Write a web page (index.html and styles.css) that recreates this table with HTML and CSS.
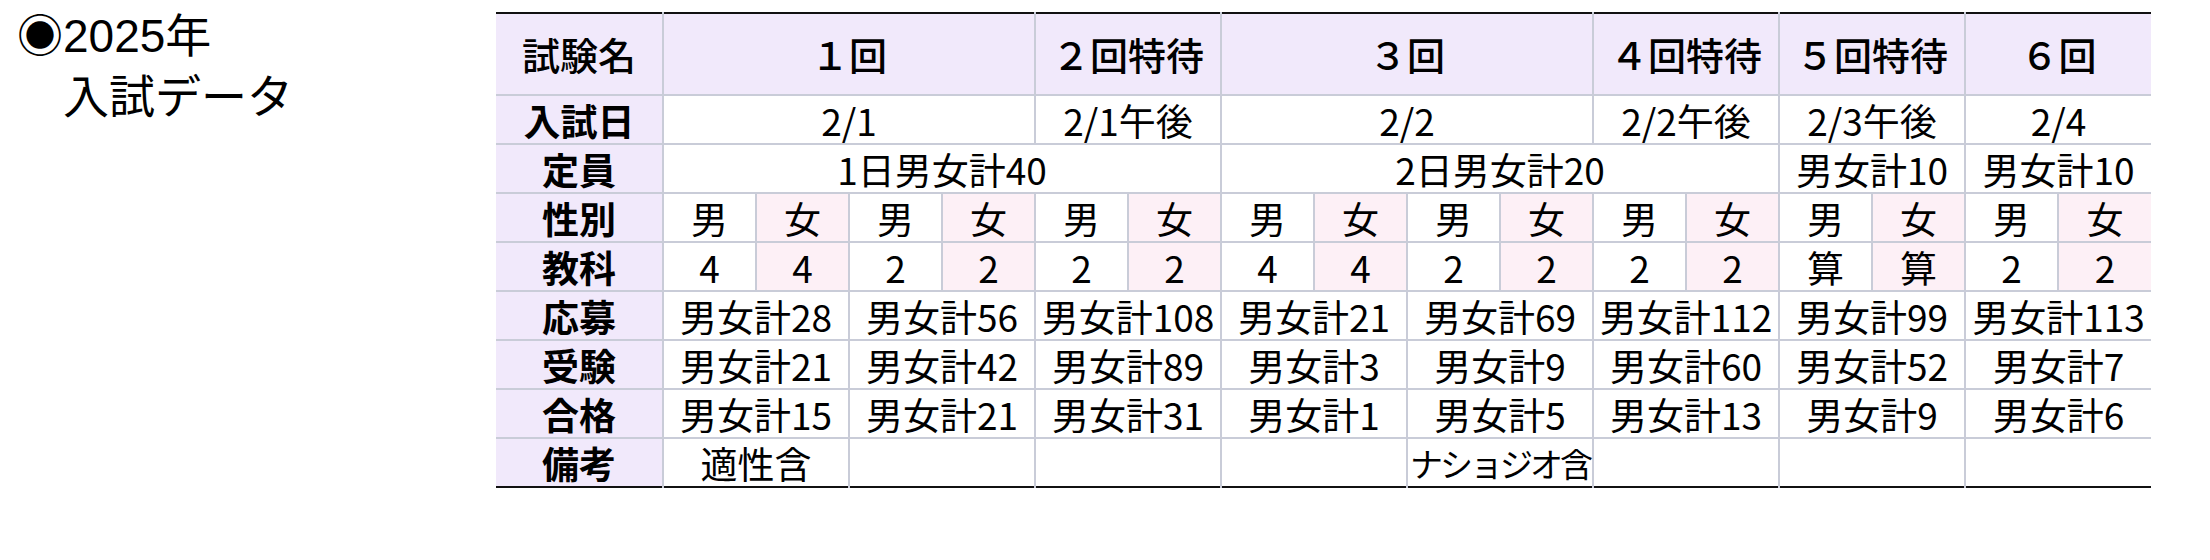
FILE: index.html
```html
<!DOCTYPE html>
<html lang="ja">
<head>
<meta charset="utf-8">
<title>2025年 入試データ</title>
<link rel="stylesheet" href="styles.css">
</head>
<body>
<div class="page">
  <h2 class="title">◉2025年<br>　入試データ</h2>
  <table class="exam">
    <colgroup>
      <col class="c-label">
      <col class="c-sub"><col class="c-sub"><col class="c-sub"><col class="c-sub">
      <col class="c-sub"><col class="c-sub"><col class="c-sub"><col class="c-sub">
      <col class="c-sub"><col class="c-sub"><col class="c-sub"><col class="c-sub">
      <col class="c-sub"><col class="c-sub"><col class="c-sub"><col class="c-sub">
    </colgroup>
    <thead>
      <tr class="head">
        <th class="lbl">試験名</th>
        <th colspan="4">１回</th>
        <th colspan="2">２回特待</th>
        <th colspan="4">３回</th>
        <th colspan="2">４回特待</th>
        <th colspan="2">５回特待</th>
        <th colspan="2">６回</th>
      </tr>
    </thead>
    <tbody>
      <tr>
        <th class="lbl">入試日</th>
        <td colspan="4">2/1</td>
        <td colspan="2">2/1午後</td>
        <td colspan="4">2/2</td>
        <td colspan="2">2/2午後</td>
        <td colspan="2">2/3午後</td>
        <td colspan="2">2/4</td>
      </tr>
      <tr>
        <th class="lbl">定員</th>
        <td colspan="6">1日男女計40</td>
        <td colspan="6">2日男女計20</td>
        <td colspan="2">男女計10</td>
        <td colspan="2">男女計10</td>
      </tr>
      <tr>
        <th class="lbl">性別</th>
        <td>男</td><td class="f">女</td><td>男</td><td class="f">女</td>
        <td>男</td><td class="f">女</td><td>男</td><td class="f">女</td>
        <td>男</td><td class="f">女</td><td>男</td><td class="f">女</td>
        <td>男</td><td class="f">女</td><td>男</td><td class="f">女</td>
      </tr>
      <tr>
        <th class="lbl">教科</th>
        <td>4</td><td class="f">4</td><td>2</td><td class="f">2</td>
        <td>2</td><td class="f">2</td><td>4</td><td class="f">4</td>
        <td>2</td><td class="f">2</td><td>2</td><td class="f">2</td>
        <td>算</td><td class="f">算</td><td>2</td><td class="f">2</td>
      </tr>
      <tr>
        <th class="lbl">応募</th>
        <td colspan="2">男女計28</td><td colspan="2">男女計56</td>
        <td colspan="2">男女計108</td><td colspan="2">男女計21</td>
        <td colspan="2">男女計69</td><td colspan="2">男女計112</td>
        <td colspan="2">男女計99</td><td colspan="2">男女計113</td>
      </tr>
      <tr>
        <th class="lbl">受験</th>
        <td colspan="2">男女計21</td><td colspan="2">男女計42</td>
        <td colspan="2">男女計89</td><td colspan="2">男女計3</td>
        <td colspan="2">男女計9</td><td colspan="2">男女計60</td>
        <td colspan="2">男女計52</td><td colspan="2">男女計7</td>
      </tr>
      <tr>
        <th class="lbl">合格</th>
        <td colspan="2">男女計15</td><td colspan="2">男女計21</td>
        <td colspan="2">男女計31</td><td colspan="2">男女計1</td>
        <td colspan="2">男女計5</td><td colspan="2">男女計13</td>
        <td colspan="2">男女計9</td><td colspan="2">男女計6</td>
      </tr>
      <tr class="last">
        <th class="lbl">備考</th>
        <td colspan="2">適性含</td><td colspan="2"></td>
        <td colspan="2"></td><td colspan="2"></td>
        <td colspan="2" class="narrow">ナショジオ含</td><td colspan="2"></td>
        <td colspan="2"></td><td colspan="2"></td>
      </tr>
    </tbody>
  </table>
</div>
</body>
</html>
```
FILE: styles.css
```css
html, body {
  margin: 0;
  padding: 0;
  background: #ffffff;
}

.page {
  display: flex;
  align-items: flex-start;
  width: 2210px;
  height: 560px;
}

.title {
  width: 479px;
  margin: 0;
  padding: 6px 0 0 17px;
  font-family: "Liberation Sans", "Noto Sans CJK JP", sans-serif;
  font-weight: normal;
  font-size: 46px;
  line-height: 61px;
  color: #000;
}

.exam {
  margin-top: 12px;
  border-collapse: collapse;
  table-layout: fixed;
  width: 1655px;
  font-family: "Noto Sans CJK JP", sans-serif;
  font-size: 37px;
  color: #000;
  border-top: 2px solid #111;
  border-bottom: 2px solid #111;
}

.c-label { width: 167px; }
.c-sub { width: 93px; }

.exam th,
.exam td {
  padding: 0;
  text-align: center;
  vertical-align: middle;
  white-space: nowrap;
  border: 2px solid #c9ccd8;
  height: 47px;
  line-height: 44px;
}

.exam tr > :first-child { border-left: none; }
.exam tr > :last-child { border-right: none; }
.exam thead th { border-top: none; }
.exam tr.last > * { border-bottom: none; }

.exam .head th {
  height: 80px;
  background: #f1e9fb;
  font-weight: 500;
  font-size: 38px;
}

.exam .lbl {
  background: #f1e9fb;
  font-weight: bold;
  font-size: 37px;
}

.exam td.f {
  background: #fdf0f6;
}

.exam td.narrow {
  font-size: 33px;
  letter-spacing: -3px;
}
```
